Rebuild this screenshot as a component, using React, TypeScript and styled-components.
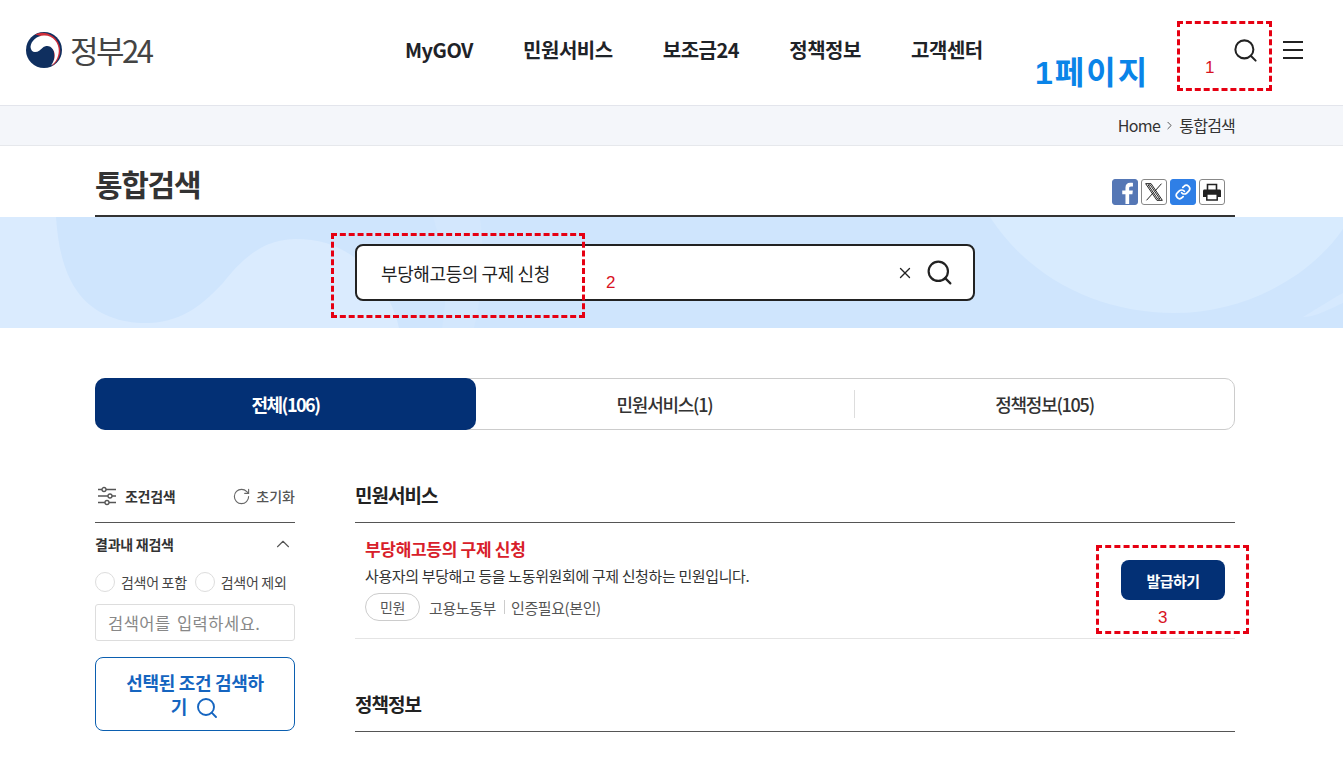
import React from "react"
import styled, { createGlobalStyle } from "styled-components"
import { Search, X, ChevronUp, ChevronRight, RotateCw, Link } from "lucide-react"

const GlobalStyle = createGlobalStyle`
  html, body { margin: 0; padding: 0; background: #fff; overflow: hidden; }
  * { box-sizing: border-box; }
  body { font-family: "Noto Sans CJK KR", "Noto Sans", sans-serif; color: #1f2328; }
`

const NAV = ["MyGOV", "민원서비스", "보조금24", "정책정보", "고객센터"]

const App: React.FC = () => (
  <Page>
    <GlobalStyle />
    <Header>
      <LogoLink>
        <svg width="36" height="36" viewBox="0 0 36 36">
          <circle cx="18" cy="18" r="18" fill="#0f2f5f" />
          <path d="M9 2.400A18 18 0 0 1 26 34A22 22 0 0 0 9 2.400z" fill="#cd2e3a" />
          <path d="M4.500 15C5 9 11 3.800 18 3.600C27 3.400 33 11 32.800 19C32.600 26 29 31 25 33.500C29 28 30 22 27 17.500C24.500 13.500 20 13 17 15.500C14 18 12.500 20 9 20C6.500 20 4.800 18 4.500 15z" fill="#fff" />
        </svg>
        <LogoText>정부24</LogoText>
      </LogoLink>
      <Nav>
        {NAV.map(n => <NavItem key={n}>{n}</NavItem>)}
      </Nav>
      <PageLabel>1페이지</PageLabel>
      <HeaderIcons>
        <Search size={27} strokeWidth={1.8} color="#222" />
        <Hamburger><i /><i /><i /></Hamburger>
      </HeaderIcons>
      <Note $x={1177} $y={21} $w={95} $h={70} />
      <NoteNum $x={1205} $y={56}>1</NoteNum>
    </Header>

    <Crumbs>
      <CrumbsInner>
        Home
        <ChevronRight size={13} strokeWidth={1.5} color="#333" style={{ margin: "1px 3px 0" }} />
        <CrumbLast>통합검색</CrumbLast>
      </CrumbsInner>
    </Crumbs>

    <TitleRow>
      <Title>통합검색</Title>
      <ShareRow>
        <ShareBtn $bg="#5577b5" $border="#5577b5">
          <svg width="26" height="26" viewBox="0 0 26 26"><path d="M13.500 26V15.500h-3.500v-4.200h3.500V8.300c0-3.400 2-5.300 5.100-5.300 1.400 0 2.500.1 3 .2v3.800h-2.100c-1.700 0-2 .8-2 2v2.300h4l-.5 4.200h-3.500V26z" fill="#fff" /></svg>
        </ShareBtn>
        <ShareBtn>
          <svg width="20" height="20" viewBox="0 0 24 24"><path d="M2 2h6.500l13.500 20h-6.500zM5 3.500l11.500 17h2.500L7.500 3.500zM21 2l-8 9M3 22l8.500-9.500" fill="none" stroke="#222" strokeWidth="1.200" /></svg>
        </ShareBtn>
        <ShareBtn $bg="#2f7fe6" $border="#2f7fe6">
          <Link size={16} color="#fff" strokeWidth={2.6} />
        </ShareBtn>
        <ShareBtn>
          <svg width="20" height="18" viewBox="0 0 20 18">
            <path d="M5.500 7V1.500h9V7" fill="none" stroke="#222" strokeWidth="1.600" />
            <path d="M2.500 6.500h15c1 0 1.500.6 1.500 1.500v6h-18V8c0-.9.500-1.500 1.500-1.500z" fill="#222" />
            <rect x="4.800" y="11" width="10.400" height="6" fill="#fff" stroke="#222" strokeWidth="1.500" />
          </svg>
        </ShareBtn>
      </ShareRow>
    </TitleRow>

    <Hero>
      <HeroArt viewBox="0 0 1343 111" preserveAspectRatio="none">
        <rect width="1343" height="111" fill="#cfe5fd" />
        <path d="M0 0H56C58 30 64 58 80 78C98 100 125 107 150 106C185 104 205 85 223 66C243 40 265 22 296 22C325 22 350 32 370 55C385 72 395 92 399 111H0z" fill="#daebfe" />
        <path d="M433 0C446 40 448 80 442 111H474C484 70 484 30 480 0z" fill="#d3e7fd" />
        <path d="M990 0C1030 62 1100 96 1174 96C1245 96 1310 60 1343 12V0z" fill="#d8ebfe" />
        <path d="M1303 100C1320 90 1335 80 1343 76V86C1330 92 1315 100 1303 100z" fill="#d6e9fe" />
      </HeroArt>
      <SearchBox>
        <SearchText>부당해고등의 구제 신청</SearchText>
        <X size={18} color="#222" strokeWidth={1.800} />
        <Search size={29} color="#222" strokeWidth={1.800} />
      </SearchBox>
      <Note $x={331} $y={16} $w={254} $h={85} />
      <NoteNum $x={606} $y={54}>2</NoteNum>
    </Hero>

    <Tabs>
      <Tab $active>전체(106)</Tab>
      <Tab>민원서비스(1)</Tab>
      <TabDivider />
      <Tab>정책정보(105)</Tab>
    </Tabs>

    <Content>
      <Side>
        <SideHead>
          <SideTitle>
            <svg width="20" height="20" viewBox="0 0 20 20" fill="#fff" stroke="#555" strokeWidth="1.300">
              <path d="M1 3.500h18M1 10h18M1 16.500h18" />
              <circle cx="7" cy="3.500" r="2" />
              <circle cx="13" cy="10" r="2" />
              <circle cx="10" cy="16.500" r="2" />
            </svg>
            조건검색
          </SideTitle>
          <Reset><RotateCw size={19} color="#666" strokeWidth={1.400} />초기화</Reset>
        </SideHead>
        <SideGroup>
          <GroupTitle>결과내 재검색<ChevronUp size={22} color="#555" strokeWidth={1.200} /></GroupTitle>
          <Radios>
            <RadioItem><RadioDot />검색어 포함</RadioItem>
            <RadioItem><RadioDot />검색어 제외</RadioItem>
          </Radios>
          <SideInput>검색어를 입력하세요.</SideInput>
          <SideButton>
            선택된 조건 검색하기
            <Search size={24} strokeWidth={1.900} style={{ verticalAlign: "-6px", marginLeft: 8 }} />
          </SideButton>
        </SideGroup>
      </Side>

      <Main>
        <SectionTitle>민원서비스</SectionTitle>
        <ResultRow>
          <ResultBody>
            <ResultTitle>부당해고등의 구제 신청</ResultTitle>
            <ResultDesc>사용자의 부당해고 등을 노동위원회에 구제 신청하는 민원입니다.</ResultDesc>
            <ResultMeta>
              <Pill>민원</Pill>
              <span>고용노동부</span>
              <MetaBar />
              <span>인증필요(본인)</span>
            </ResultMeta>
          </ResultBody>
          <IssueBtn>발급하기</IssueBtn>
          <Note $x={741} $y={22} $w={153} $h={89} />
          <NoteNum $x={803} $y={83}>3</NoteNum>
        </ResultRow>
        <SectionTitle $next>정책정보</SectionTitle>
      </Main>
    </Content>
  </Page>
)

export default App

const Page = styled.div`
  position: relative;
  width: 1343px;
  height: 764px;
  overflow: hidden;
`
const Header = styled.header`
  position: relative;
  display: flex;
  align-items: center;
  height: 106px;
  border-bottom: 1px solid #e3e5ec;
  padding: 0 40px 0 26px;
`
const LogoLink = styled.div`
  display: flex;
  align-items: center;
  gap: 8px;
  width: 379px;
  margin-top: -6px;
`
const LogoText = styled.span`
  font-size: 31px;
  font-weight: 400;
  letter-spacing: -2.500px;
  line-height: 36px;
  color: #444;
`
const Nav = styled.nav`
  display: flex;
  gap: 50.200px;
  margin-top: -6px;
`
const NavItem = styled.span`
  font-size: 20px;
  font-weight: 700;
  letter-spacing: -0.500px;
  color: #1f2328;
`
const PageLabel = styled.span`
  position: absolute;
  left: 1035px;
  top: 51px;
  font-family: "Liberation Sans", "Noto Sans CJK KR", sans-serif;
  font-size: 32px;
  line-height: 44px;
  font-weight: 700;
  letter-spacing: 2px;
  color: #0a84e8;
  white-space: nowrap;
`
const HeaderIcons = styled.div`
  display: flex;
  align-items: center;
  gap: 24px;
  margin-left: auto;
  margin-top: -5px;
`
const Hamburger = styled.span`
  display: flex;
  flex-direction: column;
  gap: 6px;
  width: 20px;
  i {
    display: block;
    height: 2px;
    background: #222;
  }
`
const Note = styled.div<{ $x: number; $y: number; $w: number; $h: number }>`
  position: absolute;
  left: ${p => p.$x}px;
  top: ${p => p.$y}px;
  width: ${p => p.$w}px;
  height: ${p => p.$h}px;
  border: 3px dashed #e60012;
  pointer-events: none;
`
const NoteNum = styled.span<{ $x: number; $y: number }>`
  position: absolute;
  left: ${p => p.$x}px;
  top: ${p => p.$y}px;
  font-family: "Liberation Sans", sans-serif;
  font-size: 17px;
  line-height: 24px;
  color: #d8121f;
`
const Crumbs = styled.div`
  height: 40px;
  background: #f4f6fa;
  border-bottom: 1px solid #e6e8ec;
`
const CrumbsInner = styled.div`
  width: 1140px;
  margin-left: 95px;
  display: flex;
  justify-content: flex-end;
  align-items: center;
  height: 39px;
  padding-bottom: 2px;
  font-size: 16px;
  letter-spacing: -0.600px;
  color: #333;
`
const CrumbLast = styled.span`
  letter-spacing: -0.800px;
`
const TitleRow = styled.div`
  width: 1140px;
  height: 71px;
  margin-left: 95px;
  display: flex;
  justify-content: space-between;
  align-items: flex-end;
  border-bottom: 2px solid #333;
`
const Title = styled.h2`
  margin: 0 0 10px;
  font-size: 30px;
  line-height: 44px;
  font-weight: 700;
  letter-spacing: -1.300px;
  color: #333;
`
const ShareRow = styled.div`
  display: flex;
  gap: 3px;
  margin: 0 10px 10px 0;
`
const ShareBtn = styled.span<{ $bg?: string; $border?: string }>`
  display: flex;
  align-items: center;
  justify-content: center;
  width: 26px;
  height: 26px;
  border-radius: 3px;
  overflow: hidden;
  background: ${p => p.$bg || "#fff"};
  border: 1px solid ${p => p.$border || "#888"};
`
const Hero = styled.section`
  position: relative;
  height: 111px;
  display: flex;
  justify-content: center;
  align-items: center;
  padding-right: 13px;
`
const HeroArt = styled.svg`
  position: absolute;
  inset: 0;
  width: 100%;
  height: 100%;
`
const SearchBox = styled.div`
  position: relative;
  display: flex;
  align-items: center;
  width: 620px;
  height: 57px;
  padding: 0 19px 0 24px;
  gap: 11px;
  background: #fff;
  border: 2px solid #222;
  border-radius: 8px;
`
const SearchText = styled.span`
  flex: 1;
  font-size: 18px;
  letter-spacing: -0.400px;
  color: #222;
`
const Tabs = styled.div`
  position: relative;
  display: flex;
  width: 1140px;
  height: 52px;
  margin: 50px 0 0 95px;
  border: 1px solid #ccc;
  border-radius: 10px;
`
const Tab = styled.div<{ $active?: boolean }>`
  flex: 1;
  margin: -1px;
  display: flex;
  align-items: center;
  justify-content: center;
  font-size: 18px;
  font-weight: ${p => (p.$active ? 700 : 500)};
  letter-spacing: ${p => (p.$active ? "-1.500px" : "-1.250px")};
  border-radius: 10px;
  color: ${p => (p.$active ? "#fff" : "#333")};
  background: ${p => (p.$active ? "#033075" : "transparent")};
`
const TabDivider = styled.span`
  align-self: center;
  width: 1px;
  height: 28px;
  background: #ddd;
`
const Content = styled.div`
  display: flex;
  gap: 60px;
  width: 1140px;
  margin: 48px 0 0 95px;
`
const Side = styled.aside`
  width: 200px;
  flex: none;
`
const SideHead = styled.div`
  display: flex;
  justify-content: space-between;
  align-items: center;
  height: 45px;
  padding-bottom: 8px;
  border-bottom: 1px solid #555;
`
const SideTitle = styled.div`
  display: flex;
  align-items: center;
  gap: 8px;
  padding-left: 2px;
  font-size: 14px;
  font-weight: 700;
  letter-spacing: -0.300px;
  color: #333;
`
const Reset = styled.div`
  display: flex;
  align-items: center;
  gap: 5px;
  font-size: 14px;
  font-weight: 500;
  color: #555;
`
const SideGroup = styled.div`
  padding-top: 10px;
`
const GroupTitle = styled.div`
  display: flex;
  justify-content: space-between;
  align-items: center;
  padding-right: 1px;
  height: 22px;
  font-size: 14px;
  font-weight: 700;
  letter-spacing: -0.250px;
  color: #333;
`
const Radios = styled.div`
  display: flex;
  gap: 8px;
  margin-top: 17px;
`
const RadioItem = styled.label`
  display: flex;
  align-items: center;
  gap: 6px;
  font-size: 14px;
  letter-spacing: -0.300px;
  white-space: nowrap;
  color: #444;
`
const RadioDot = styled.span`
  width: 20px;
  height: 20px;
  border: 1px solid #ddd;
  border-radius: 50%;
  background: #fff;
`
const SideInput = styled.div`
  display: flex;
  align-items: center;
  height: 37px;
  margin-top: 12px;
  padding-left: 12px;
  border: 1px solid #ddd;
  border-radius: 3px;
  font-size: 16.500px;
  letter-spacing: 0.500px;
  word-spacing: 2px;
  white-space: nowrap;
  color: #888;
`
const SideButton = styled.div`
  height: 74px;
  margin-top: 16px;
  padding: 12px 27px;
  border: 1px solid #0b5fb0;
  border-radius: 8px;
  font-size: 18px;
  line-height: 24px;
  font-weight: 700;
  letter-spacing: -0.300px;
  text-align: center;
  word-break: break-all;
  color: #1565c0;
`
const Main = styled.main`
  flex: 1;
  position: relative;
`
const SectionTitle = styled.h3<{ $next?: boolean }>`
  display: flex;
  align-items: center;
  height: 45px;
  margin: ${p => (p.$next ? "48px 0 0" : "0")};
  padding-bottom: 11px;
  border-bottom: 1px solid #555;
  font-size: 19px;
  font-weight: 700;
  letter-spacing: -1px;
  color: #222;
`
const ResultRow = styled.div`
  position: relative;
  display: flex;
  justify-content: space-between;
  align-items: flex-start;
  height: 116px;
  padding: 14px 10px 0;
  border-bottom: 1px solid #e4e4e4;
`
const ResultBody = styled.div`
  display: flex;
  flex-direction: column;
`
const ResultTitle = styled.div`
  font-size: 17px;
  line-height: 24px;
  font-weight: 700;
  letter-spacing: -0.300px;
  color: #d8202a;
`
const ResultDesc = styled.div`
  margin-top: 4px;
  font-size: 15px;
  line-height: 22px;
  letter-spacing: -0.370px;
  color: #333;
`
const ResultMeta = styled.div`
  display: flex;
  align-items: center;
  margin-top: 6px;
  font-size: 15px;
  letter-spacing: -0.400px;
  color: #555;
`
const Pill = styled.span`
  display: inline-flex;
  align-items: center;
  justify-content: center;
  width: 55px;
  height: 28px;
  margin-right: 9px;
  border: 1px solid #ccc;
  border-radius: 14px;
  font-size: 14px;
`
const MetaBar = styled.i`
  width: 1px;
  height: 14px;
  margin: 0 6px 0 8px;
  background: #ccc;
`
const IssueBtn = styled.div`
  display: flex;
  align-items: center;
  justify-content: center;
  width: 104px;
  height: 40px;
  margin-top: 23px;
  border-radius: 8px;
  background: #033075;
  color: #fff;
  font-size: 15px;
  font-weight: 700;
  letter-spacing: -0.500px;
`
